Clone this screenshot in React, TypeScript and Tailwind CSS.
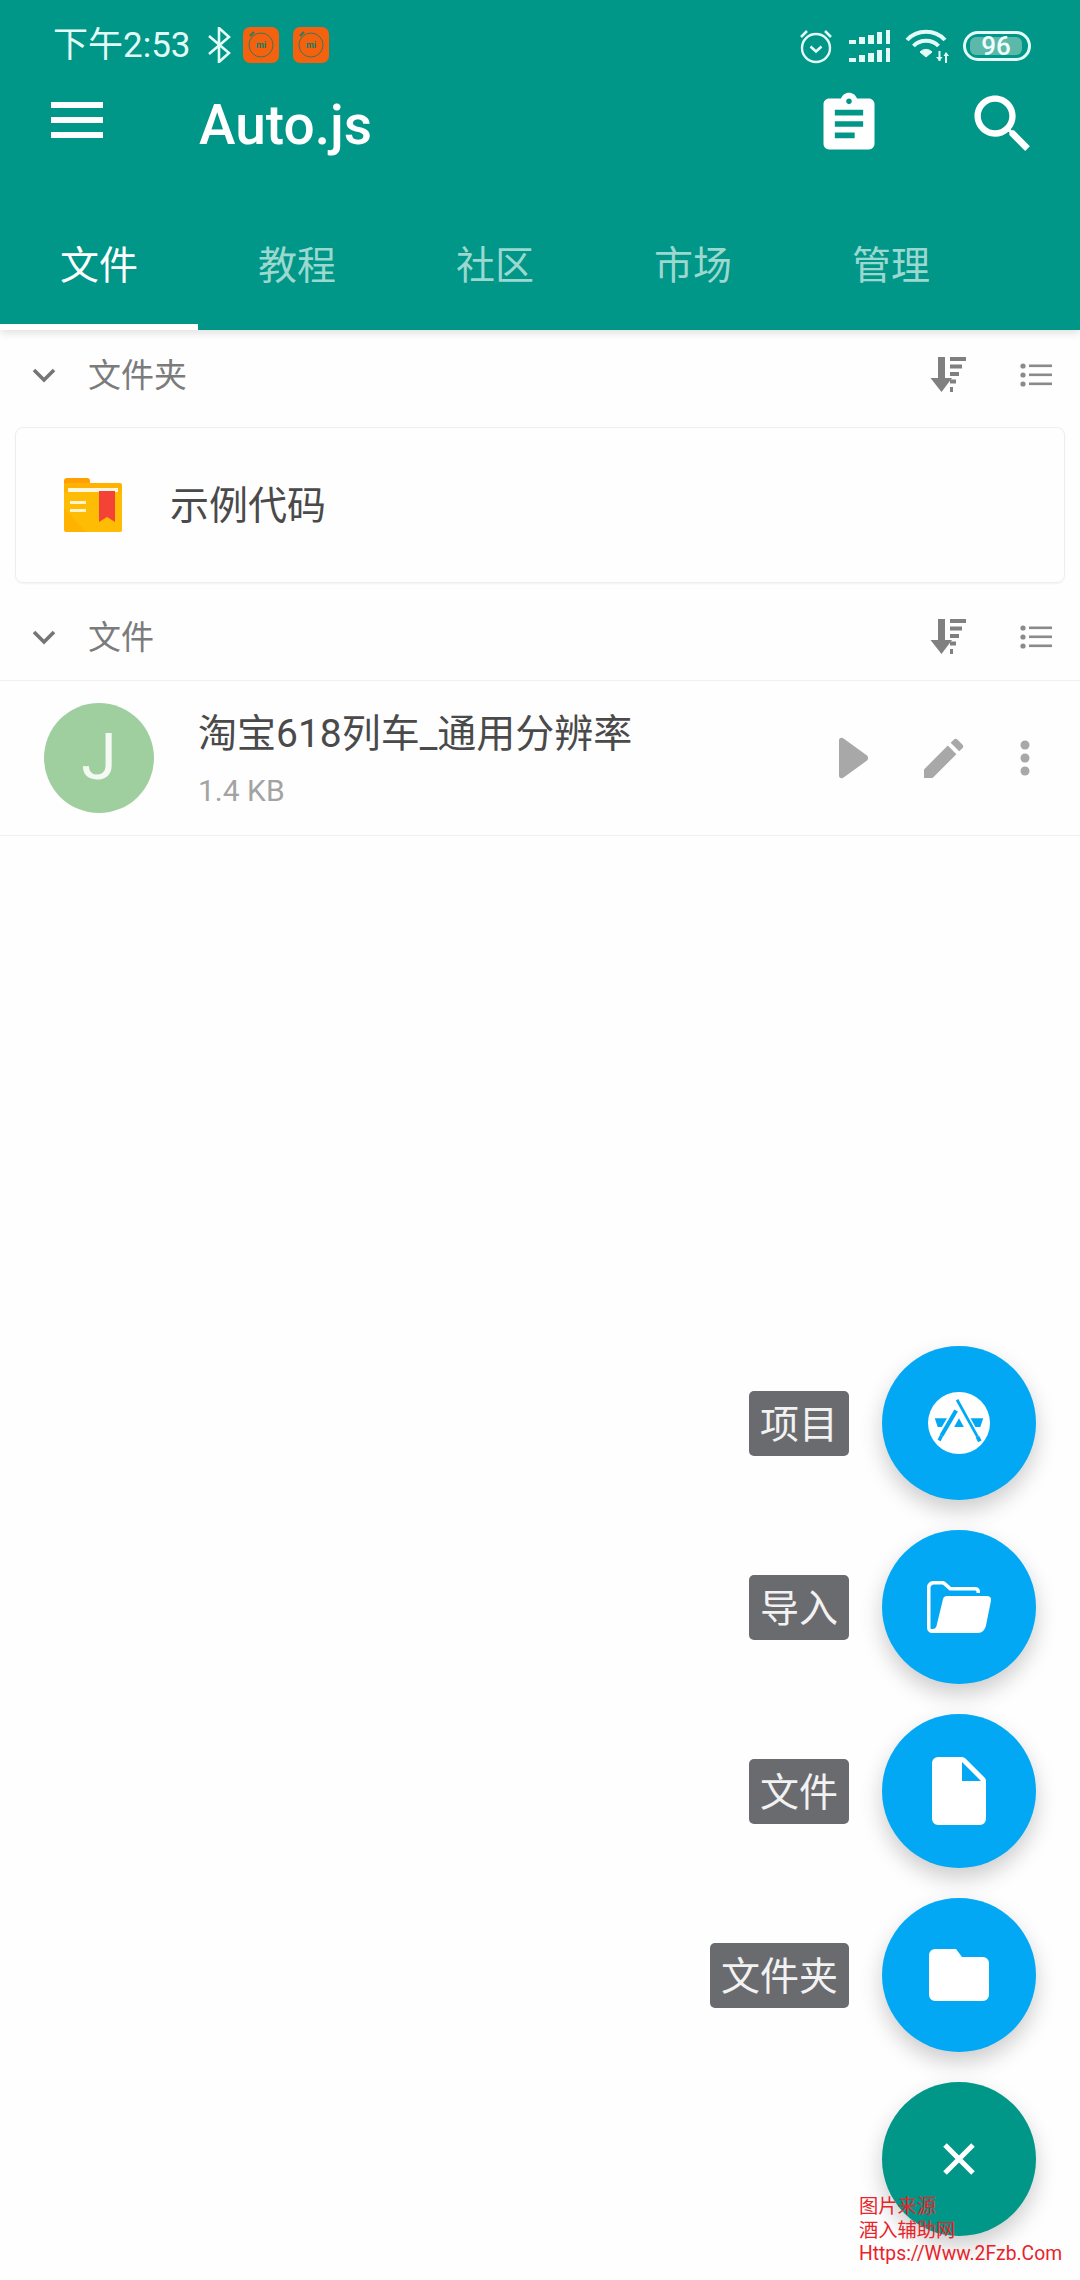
// App.tsx
// Auto.js file list with the create menu expanded.

import React from "react";

const FONT = "font-['Roboto','Noto_Sans_CJK_SC',sans-serif]";

// ── Status bar glyphs ─────────────────────────────────────────────────────────
const MiBadge: React.FC = () => (
  <svg width="36" height="36" viewBox="0 0 36 36">
    <rect width="36" height="36" rx="7" fill="#f4610f" />
    <circle cx="18" cy="18" r="12" fill="none" stroke="#0f7d68" strokeWidth="1" opacity="0.8" />
    <path d="M7 9l4-4" stroke="#0f7d68" strokeWidth="2.4" opacity="0.8" />
    <text x="18" y="21" textAnchor="middle" fontSize="9" fontWeight="700" fontFamily="Roboto" fill="#0f7d68">
      mi
    </text>
  </svg>
);

const StatusRight: React.FC = () => (
  <div className="flex items-center">
    <svg width="36" height="36" viewBox="0 0 36 36" fill="none" stroke="#e3fbf6" strokeWidth="2.4">
      <circle cx="18" cy="20" r="14" />
      <path d="M12.5 18.5l5.5 5 5.5-5" strokeWidth="2.6" />
      <path d="M3 9l6-6M33 9l-6-6" strokeWidth="2.6" />
    </svg>
    <svg className="ml-[15px]" width="41" height="33" viewBox="0 0 41 33" fill="#e3fbf6">
      <rect x="0" y="10" width="7" height="4" />
      <rect x="10" y="7" width="6" height="7" />
      <rect x="19" y="5" width="6" height="9" />
      <rect x="28" y="2" width="5" height="12" />
      <rect x="37" y="0" width="4" height="14" />
      <rect x="0" y="28" width="7" height="4" />
      <rect x="10" y="25" width="6" height="7" />
      <rect x="19" y="23" width="6" height="9" />
      <rect x="28" y="20" width="5" height="12" />
      <rect x="37" y="18" width="4" height="14" />
    </svg>
    <svg className="ml-[15px]" width="44" height="34" viewBox="0 0 44 34" fill="none" stroke="#e3fbf6">
      <path d="M2 11C12 0 30 0 40 11" strokeWidth="4" />
      <path d="M8.5 17C15 10 27 10 33.500 17" strokeWidth="4" />
      <path d="M21 28l-6-5c3-3.500 9-3.500 12 0z" fill="#e3fbf6" strokeWidth="1" />
      <path d="M34.500 22v10M41 24v10" strokeWidth="2" />
      <path d="M31 28l3.500 4 3-4M38.500 27l2.500-4 3 4" strokeWidth="0" fill="#e3fbf6" />
    </svg>
    <div className="ml-[14px] flex h-[30px] w-[68px] items-center rounded-full border-[3px] border-[#e3fbf6] px-[4px]">
      <div className="flex h-[18px] w-[52px] items-center justify-center rounded-[6px] bg-[#5cb9aa] text-[26px] font-medium leading-none text-[#f0fffb]">
        96
      </div>
    </div>
  </div>
);

// ── Toolbar / list icons ──────────────────────────────────────────────────────
const SortIcon: React.FC = () => (
  <svg width="36" height="36" viewBox="0 0 36 36" fill="#808080">
    <path d="M8 0h7v21h7L11.500 35 0.500 21H8z" />
    <rect x="20" y="0" width="16" height="4" />
    <rect x="20" y="7.500" width="12" height="4" />
    <rect x="20" y="15" width="9" height="4" />
    <rect x="20" y="22.500" width="6" height="4" />
    <rect x="20" y="30" width="3" height="5" />
  </svg>
);

const ListIcon: React.FC = () => (
  <svg width="32" height="24" viewBox="0 0 32 24" fill="#8a8a8a">
    <circle cx="3" cy="3" r="2.600" />
    <circle cx="3" cy="12" r="2.600" />
    <circle cx="3" cy="21" r="2.600" />
    <rect x="9" y="1.500" width="23" height="2.600" />
    <rect x="9" y="10.500" width="23" height="2.600" />
    <rect x="9" y="19.500" width="23" height="2.600" />
  </svg>
);

const SectionHeader: React.FC<{ title: string }> = ({ title }) => (
  <div className="flex h-[64px] items-center">
    <svg className="ml-[32px]" width="24" height="16" viewBox="0 0 24 16" fill="none" stroke="#757575" strokeWidth="3.600">
      <path d="M2 3l10 10L22 3" />
    </svg>
    <span className="ml-[32px] text-[33px] leading-none text-[#7b7b7b]">{title}</span>
    <div className="ml-auto mr-[28px] flex items-center gap-[54px]">
      <SortIcon />
      <ListIcon />
    </div>
  </div>
);

const FolderIcon: React.FC = () => (
  <svg width="58" height="54" viewBox="0 0 58 54">
    <path d="M0 3a3 3 0 013-3h20a3 3 0 013 3v3H0z" fill="#ffa000" />
    <rect y="5" width="58" height="49" rx="2" fill="#ffb300" />
    <rect x="4" y="10" width="50" height="4" fill="#fff7e0" />
    <path d="M0 14h58v38a2 2 0 01-2 2H22L0 30z" fill="#ffc107" opacity="0.6" />
    <rect x="6" y="23" width="16" height="3" fill="#fff3cd" />
    <rect x="6" y="31" width="16" height="3" fill="#fff3cd" />
    <path d="M35 13h16v31l-8-5-8 5z" fill="#f44336" />
  </svg>
);

// ── Floating action buttons ───────────────────────────────────────────────────
const AppStoreIcon: React.FC = () => (
  <svg width="62" height="62" viewBox="0 0 64 64">
    <circle cx="32" cy="32" r="32" fill="#fff" />
    <path d="M7 27h15l-5 9h-7zM42 27h15l-3 9h-7zM32 27l5 9H27z" fill="#03a8f5" />
    <g fill="none">
      <path d="M29 6l22 40" strokeWidth="6" stroke="#fff" />
      <path d="M30 8l21 38" strokeWidth="2.800" stroke="#03a8f5" />
      <path d="M51 46l2.500 5" strokeWidth="4" stroke="#03a8f5" />
      <path d="M29 19L13 46" strokeWidth="8" stroke="#fff" />
      <path d="M29 19L14 45" strokeWidth="4.200" stroke="#03a8f5" />
      <path d="M14 45l-2.500 5" strokeWidth="3.500" stroke="#03a8f5" />
    </g>
  </svg>
);

const OpenFolderIcon: React.FC = () => (
  <svg width="64" height="52" viewBox="0 0 64 52">
    <path
      d="M6 0h9c2 0 3 .6 4.500 2L24 6h24c3 0 4.500 1.500 5 4v2h-3.500v-1c0-1-.6-1.500-2-1.500H22.500L17 4.500c-1-.8-1.500-1-3-1H7c-2 0-3.500 1.500-3.500 3.500v40c0 .7.4 1 1 1h1c2 0 3.500-1 4-3L16 18c.5-2 2-3 4-3h40c3 0 4.500 2 4 4.500l-5 25c-1 4.500-4 7.500-8 7.500H6c-4 0-6-2-6-6V6c0-3 3-6 6-6z"
      fill="#fff"
    />
  </svg>
);

const FileIcon: React.FC = () => (
  <svg width="54" height="68" viewBox="0 0 54 68">
    <path
      d="M6 0h24a5 5 0 013.500 1.500l19 19A5 5 0 0154 24v38a6 6 0 01-6 6H6a6 6 0 01-6-6V6a6 6 0 016-6zm24 5v19h19z"
      fill="#fff"
      fillRule="evenodd"
    />
  </svg>
);

const ClosedFolderIcon: React.FC = () => (
  <svg width="60" height="52" viewBox="0 0 60 52">
    <path
      d="M6 0h21l6 8h21a6 6 0 016 6v32a6 6 0 01-6 6H6a6 6 0 01-6-6V6a6 6 0 016-6z"
      fill="#fff"
    />
  </svg>
);

const FabRow: React.FC<{ label: string; icon: React.ReactNode }> = ({ label, icon }) => (
  <div className="flex items-center justify-end gap-[33px]">
    <div className="flex h-[65px] items-center rounded-[5px] bg-[#6a6b6f] px-[11px] pt-[4px] text-[39px] leading-none text-[#f2f2f2]">
      {label}
    </div>
    <div className="flex h-[154px] w-[154px] items-center justify-center rounded-full bg-[#03a8f5] shadow-[0_10px_22px_rgba(0,0,0,0.2)]">
      {icon}
    </div>
  </div>
);

// ─────────────────────────────────────────────────────────────────────────────
const App: React.FC = () => {
  const tabs = ["文件", "教程", "社区", "市场", "管理"];

  return (
    <div className={`relative h-[2280px] w-[1080px] overflow-hidden bg-[#fefefe] ${FONT}`}>
      {/* ── App bar ── */}
      <header className="relative z-10 h-[330px] bg-[#009688] shadow-[0_3px_8px_rgba(0,0,0,0.12)]">
        <div className="flex h-[64px] items-end justify-between pl-[53px] pr-[49px]">
          <div className="flex h-[38px] items-center text-[#e3fbf6]">
            <span className="text-[35px] leading-none">下午2:53</span>
            <svg className="ml-[16px]" width="24" height="36" viewBox="0 0 24 36" fill="none" stroke="#e3fbf6" strokeWidth="2.600">
              <path d="M2 9l20 17-10 9V1l10 9L2 27" />
            </svg>
            <div className="ml-[12px] flex gap-[14px]">
              <MiBadge />
              <MiBadge />
            </div>
          </div>
          <StatusRight />
        </div>

        <div className="flex h-[134px] items-start">
          <div className="flex h-[112px] w-full items-center">
            <svg className="ml-[51px]" width="52" height="36" viewBox="0 0 52 36" fill="#fff">
              <rect width="52" height="6" y="0" />
              <rect width="52" height="6" y="15" />
              <rect width="52" height="6" y="30" />
            </svg>
            <span className="ml-[96px] mt-[10px] text-[55px] font-medium leading-none text-white">Auto.js</span>
            <div className="ml-auto mr-[39px] mt-[8px] flex items-center gap-[82px]">
              <svg width="68" height="68" viewBox="0 0 24 24" fill="#fff">
                <path d="M19 3h-4.180C14.400 1.840 13.300 1 12 1c-1.300 0-2.400.84-2.820 2H5c-1.100 0-2 .9-2 2v14c0 1.100.9 2 2 2h14c1.100 0 2-.9 2-2V5c0-1.100-.9-2-2-2zm-7 0c.55 0 1 .45 1 1s-.45 1-1 1-1-.45-1-1 .45-1 1-1zm2 14H7v-2h7v2zm3-4H7v-2h10v2zm0-4H7V7h10v2z" />
              </svg>
              <svg width="76" height="76" viewBox="0 0 24 24" fill="#fff">
                <path d="M15.500 14h-.79l-.28-.27C15.410 12.590 16 11.110 16 9.500 16 5.910 13.090 3 9.500 3S3 5.910 3 9.500 5.910 16 9.500 16c1.610 0 3.090-.59 4.230-1.570l.27.28v.79l5 4.990L20.490 19l-4.990-5zm-6 0C7.010 14 5 11.990 5 9.500S7.010 5 9.500 5 14 7.010 14 9.500 11.990 14 9.500 14z" />
              </svg>
            </div>
          </div>
        </div>

        <nav className="flex h-[132px]">
          {tabs.map((tab, i) => (
            <div
              key={tab}
              className={
                i === 0
                  ? "flex h-full w-[198px] items-center justify-center border-b-[6px] border-white pt-[10px] text-[39px] leading-none text-white"
                  : "flex h-full w-[198px] items-center justify-center pt-[4px] text-[39px] leading-none text-[#9bd8cf]"
              }
            >
              {tab}
            </div>
          ))}
        </nav>
      </header>

      {/* ── Folder section ── */}
      <main>
        <div className="pt-[13px]">
          <SectionHeader title="文件夹" />
        </div>
        <div className="mx-[15px] mt-[20px] flex h-[156px] items-center rounded-[8px] border border-[#eeeeee] shadow-[0_1px_2px_rgba(0,0,0,0.05)]">
          <div className="ml-[48px] flex">
            <FolderIcon />
          </div>
          <span className="ml-[48px] pt-[2px] text-[39px] leading-none text-[#4a4a4a]">示例代码</span>
        </div>

        {/* ── File section ── */}
        <div className="mt-[22px]">
          <SectionHeader title="文件" />
        </div>
        <div className="mt-[11px] flex h-[156px] items-center border-y border-[#f0f0f0]">
          <div className="ml-[44px] flex h-[110px] w-[110px] items-center justify-center rounded-full bg-[#a0cf9f] text-[64px] leading-none text-[#f4faf3]">
            J
          </div>
          <div className="ml-[44px] flex flex-col">
            <span className="text-[39px] leading-[50px] text-[#4a4a4a]">淘宝618列车_通用分辨率</span>
            <span className="mt-[16px] text-[30px] leading-[32px] text-[#a3a3a3]">1.4 KB</span>
          </div>
          <div className="ml-auto mr-[48px] flex items-center">
            <svg width="30" height="42" viewBox="0 0 32 44" fill="#a8a8a8">
              <path d="M0 3c0-2.500 2.500-3.500 4.500-2l25 18c2 1.500 2 4.500 0 6l-25 18c-2 1.500-4.500.5-4.500-2z" />
            </svg>
            <svg className="ml-[55px]" width="40" height="40" viewBox="0 0 42 42" fill="#a8a8a8">
              <path d="M0 33L25 8l9 9L9 42H0zM28 5l3.500-3.500c1-1 2.500-1 3.500 0l5.500 5.500c1 1 1 2.500 0 3.500L37 14z" />
            </svg>
            <svg className="ml-[54px]" width="14" height="36" viewBox="0 0 14 36" fill="#a8a8a8">
              <circle cx="7" cy="5" r="4.500" />
              <circle cx="7" cy="18" r="4.500" />
              <circle cx="7" cy="31" r="4.500" />
            </svg>
          </div>
        </div>
      </main>

      {/* ── Expanded FAB menu ── */}
      <div className="absolute bottom-[44px] right-[44px] flex flex-col gap-[30px]">
        <FabRow label="项目" icon={<AppStoreIcon />} />
        <FabRow label="导入" icon={<OpenFolderIcon />} />
        <FabRow label="文件" icon={<FileIcon />} />
        <FabRow label="文件夹" icon={<ClosedFolderIcon />} />
        <div className="ml-auto flex h-[154px] w-[154px] items-center justify-center rounded-full bg-[#009688] shadow-[0_10px_22px_rgba(0,0,0,0.2)]">
          <svg width="32" height="32" viewBox="0 0 32 32" stroke="#fff" strokeWidth="5">
            <path d="M2 2l28 28M30 2L2 30" />
          </svg>
        </div>
      </div>

      {/* ── Watermark ── */}
      <div className="absolute left-[859px] top-[2195px] whitespace-nowrap text-[19.3px] leading-[23.5px] text-[#e8232a]">
        <div>图片来源</div>
        <div>酒入辅助网</div>
        <div>Https://Www.2Fzb.Com</div>
      </div>
    </div>
  );
};

export default App;
